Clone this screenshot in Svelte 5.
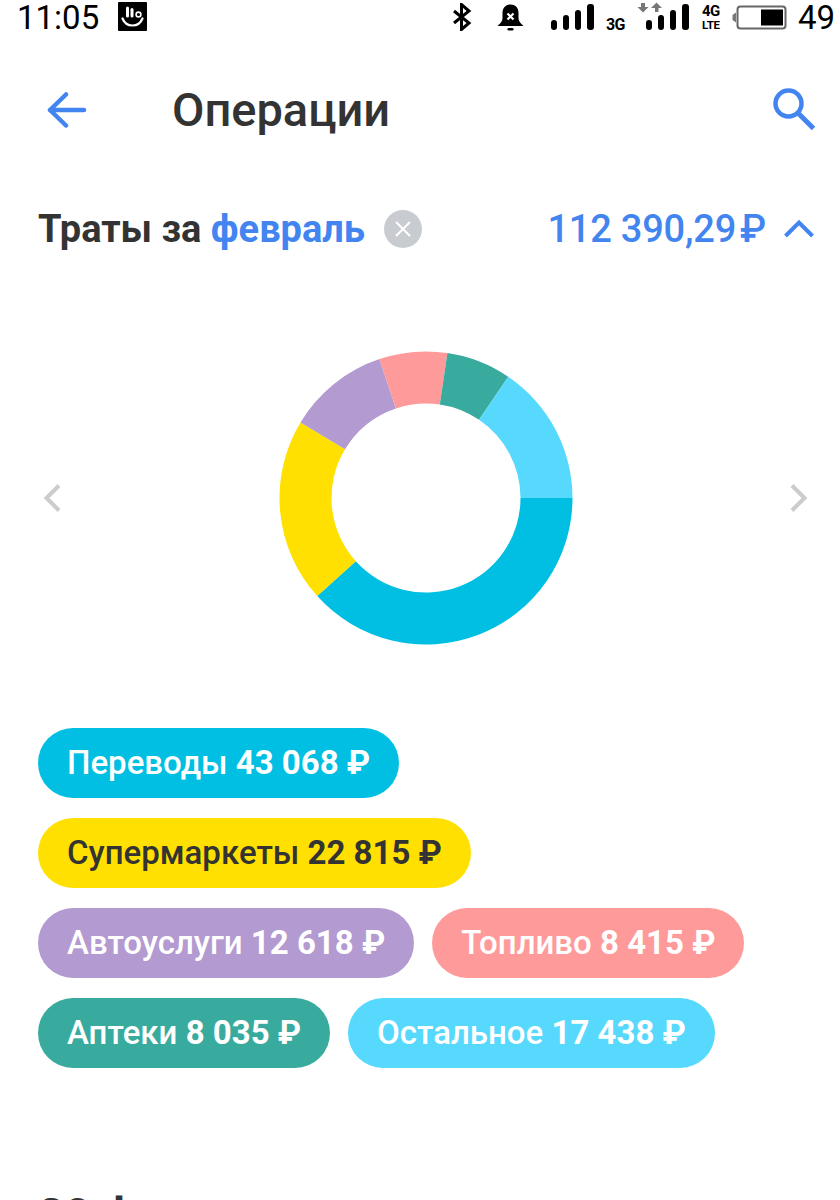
<script>
  const categories = [
    { name: 'Переводы', amount: 43068, color: '#00bfe3' },
    { name: 'Супермаркеты', amount: 22815, color: '#ffe000', dark: true },
    { name: 'Автоуслуги', amount: 12618, color: '#b39ad0' },
    { name: 'Топливо', amount: 8415, color: '#ff9a9a' },
    { name: 'Аптеки', amount: 8035, color: '#38ab9e' },
    { name: 'Остальное', amount: 17438, color: '#56d9fc' }
  ];

  const total = categories.reduce((sum, c) => sum + c.amount, 0);
  const R = 146.5;
  const r = 94.5;
  const c = 147;

  function point(radius, angle) {
    return `${(c + radius * Math.cos(angle)).toFixed(2)} ${(c + radius * Math.sin(angle)).toFixed(2)}`;
  }

  let acc = 0;
  const slices = categories.map((cat) => {
    const a0 = (acc / total) * Math.PI * 2;
    acc += cat.amount;
    const a1 = (acc / total) * Math.PI * 2;
    const large = a1 - a0 > Math.PI ? 1 : 0;
    return {
      color: cat.color,
      d: `M${point(R, a0)}A${R} ${R} 0 ${large} 1 ${point(R, a1)}L${point(r, a1)}A${r} ${r} 0 ${large} 0 ${point(r, a0)}Z`
    };
  });

  const fmt = (n) => String(n).replace(/(\d)(?=\d{3}$)/, '$1 ');
</script>

<div class="screen">
  <div class="status">
    <span class="time">11:05</span>
    <svg class="touchpal" width="29" height="29" viewBox="0 0 29 29">
      <rect width="29" height="29" rx="1" fill="#000" />
      <rect x="8" y="4.500" width="3" height="11" rx="1.500" fill="#fff" />
      <rect x="12.500" y="6" width="3" height="9.500" rx="1.500" fill="#fff" />
      <circle cx="20.500" cy="12.500" r="2.400" fill="none" stroke="#fff" stroke-width="1.600" />
      <path d="M4.500 16.500c2 5 6 7 10 7s8-2 10-7" fill="none" stroke="#fff" stroke-width="2.200" stroke-linecap="round" />
    </svg>
    <span class="spring"></span>
    <svg class="bt" width="20" height="28" viewBox="0 0 20 28">
      <path d="M2 8l15 12-7.500 6.500V1.500L17 8 2 20" fill="none" stroke="#000" stroke-width="3" />
    </svg>
    <svg class="bell" width="27" height="27" viewBox="0 0 27 27">
      <path d="M13.500 0.500c-5.500 0-8 4-8 8.500v5c0 3-2 5.500-5 8h26c-3-2.500-5-5-5-8V9c0-4.500-2.500-8.500-8-8.500z" fill="#000" />
      <rect x="10.500" y="24" width="6" height="2.500" rx="1.200" fill="#000" />
      <path d="M10.500 9.500l6 6M16.500 9.500l-6 6" stroke="#fff" stroke-width="2.200" />
    </svg>
    <svg class="bars" width="43" height="26" viewBox="0 0 43 26">
      <rect x="0" y="16" width="6" height="10" rx="3" />
      <rect x="12" y="11" width="6" height="15" rx="3" />
      <rect x="24" y="6" width="6" height="20" rx="3" />
      <rect x="36" y="0" width="7" height="26" rx="3" />
    </svg>
    <span class="net-3g">3G</span>
    <svg class="bars2" width="52" height="28" viewBox="0 0 52 28">
      <path d="M4 1h4v4h3.500L6 10.500 .5 5H4zM18 10V6h-4L19.500 .5 25 6h-3.500v4z" fill="#777" />
      <rect x="9" y="18" width="6" height="10" rx="3" />
      <rect x="21" y="13" width="6" height="15" rx="3" />
      <rect x="33" y="8" width="6" height="20" rx="3" />
      <rect x="45" y="2" width="7" height="26" rx="3" />
    </svg>
    <span class="net-4g"><span class="g4">4G</span><span class="lte">LTE</span></span>
    <svg class="battery" width="55" height="25" viewBox="0 0 55 25">
      <path d="M4 7.500v10L.5 15v-5z" fill="#777" />
      <rect x="5.500" y="1.500" width="48" height="22" rx="3" fill="#fff" stroke="#666" stroke-width="2" />
      <rect x="29" y="4.500" width="22" height="16" fill="#000" />
    </svg>
    <span class="level">49</span>
  </div>

  <header>
    <svg class="back" width="40" height="38" viewBox="0 0 40 38">
      <path d="M3 19h34M19 3.500L3 19l16 15.500" fill="none" stroke="#4285f0" stroke-width="4.500" stroke-linecap="round" stroke-linejoin="round" />
    </svg>
    <h1>Операции</h1>
    <svg class="search" width="44" height="44" viewBox="0 0 44 44">
      <circle cx="16.500" cy="16.500" r="13" fill="none" stroke="#4285f0" stroke-width="4.500" />
      <path d="M26 26l15.500 15.500" stroke="#4285f0" stroke-width="5" />
    </svg>
  </header>

  <div class="summary">
    <span class="title">Траты за <span class="month">февраль</span></span>
    <svg class="clear" width="38" height="38" viewBox="0 0 38 38">
      <circle cx="19" cy="19" r="19" fill="#c8cbd0" />
      <path d="M12 12l14 14M26 12L12 26" stroke="#fff" stroke-width="2" />
    </svg>
    <span class="spring"></span>
    <span class="sum">112 390,29<span class="rub">₽</span></span>
    <svg class="up" width="32" height="20" viewBox="0 0 32 20">
      <path d="M2.500 17L16 3.500 29.500 17" fill="none" stroke="#4285f0" stroke-width="4" />
    </svg>
  </div>

  <div class="chart">
    <svg class="arrow" width="22" height="30" viewBox="0 0 22 30">
      <path d="M18 2.500L5.500 15 18 27.500" fill="none" stroke="#ccc" stroke-width="4" />
    </svg>
    <svg width="294" height="294" viewBox="0 0 294 294">
      {#each slices as s}
        <path d={s.d} fill={s.color} />
      {/each}
    </svg>
    <svg class="arrow" width="22" height="30" viewBox="0 0 22 30">
      <path d="M4 2.500L16.500 15 4 27.500" fill="none" stroke="#ccc" stroke-width="4" />
    </svg>
  </div>

  <div class="chips">
    {#each categories as cat}
      <div class="chip" class:dark={cat.dark} style="background: {cat.color}">
        {cat.name} <b>{fmt(cat.amount)} ₽</b>
      </div>
    {/each}
  </div>

  <h2>20 февраля</h2>
</div>

<style>
  :global(body) {
    margin: 0;
    background: #fff;
  }

  .screen {
    width: 840px;
    height: 1200px;
    overflow: hidden;
    font-family: Roboto, "Liberation Sans", sans-serif;
    color: #333;
    background: #fff;
  }

  .status {
    display: flex;
    align-items: center;
    height: 34px;
    padding: 0 5px 0 17px;
    color: #000;
  }

  .time {
    font-size: 33px;
    width: 101px;
    line-height: 34px;
    margin-top: 2px;
  }

  .touchpal {
    margin-top: -2px;
  }

  .spring {
    flex: 1;
  }

  .bt {
    margin-right: 25px;
  }

  .bell {
    margin-right: 27px;
  }

  .bars {
    margin-right: 12px;
  }

  .bars2 {
    margin-right: 12px;
    margin-left: 11px;
    margin-top: -2px;
  }

  .net-3g {
    font-size: 16px;
    font-weight: 700;
    width: 20px;
    margin-top: 14px;
    letter-spacing: -0.5px;
  }

  .net-4g {
    display: flex;
    flex-direction: column;
    font-weight: 700;
    width: 20px;
    margin-right: 11px;
    text-align: center;
  }

  .g4 {
    font-size: 15px;
    line-height: 15px;
    letter-spacing: -0.5px;
  }

  .lte {
    font-size: 11.500px;
    line-height: 12px;
    letter-spacing: -0.3px;
  }

  .level {
    font-size: 33px;
    margin-left: 11px;
    line-height: 34px;
    margin-top: 2px;
  }

  header {
    display: flex;
    align-items: center;
    height: 44px;
    margin-top: 54px;
    padding: 0 24px 0 47px;
  }

  h1 {
    margin: 0 0 0 85px;
    font-size: 47px;
    line-height: 44px;
    font-weight: 500;
    flex: 1;
  }

  .search {
    margin-top: -3px;
  }

  .summary {
    display: flex;
    align-items: center;
    height: 40px;
    margin-top: 77px;
    padding: 0 25px 0 38px;
  }

  .title {
    font-size: 38px;
    font-weight: 700;
  }

  .month {
    color: #4285f0;
  }

  .clear {
    margin-left: 19px;
  }

  .sum {
    font-size: 38px;
    font-weight: 500;
    color: #4285f0;
    letter-spacing: -0.2px;
  }

  .rub {
    margin-left: 4px;
  }

  .up {
    margin-left: 17px;
  }

  .chart {
    display: flex;
    align-items: center;
    justify-content: space-between;
    margin-top: 102px;
    padding: 0 30px 0 41px;
  }

  .chips {
    display: flex;
    flex-wrap: wrap;
    gap: 20px 18px;
    margin-top: 83px;
    padding: 0 38px;
  }

  .chip {
    height: 70px;
    line-height: 70px;
    border-radius: 35px;
    padding: 0 29px;
    font-size: 33px;
    font-weight: 500;
    color: #fff;
    white-space: nowrap;
  }

  .chip.dark {
    color: #333;
  }

  .chip b {
    font-weight: 700;
  }

  h2 {
    margin: 121px 0 0 38px;
    font-size: 46px;
    font-weight: 700;
    line-height: 52px;
  }
</style>
